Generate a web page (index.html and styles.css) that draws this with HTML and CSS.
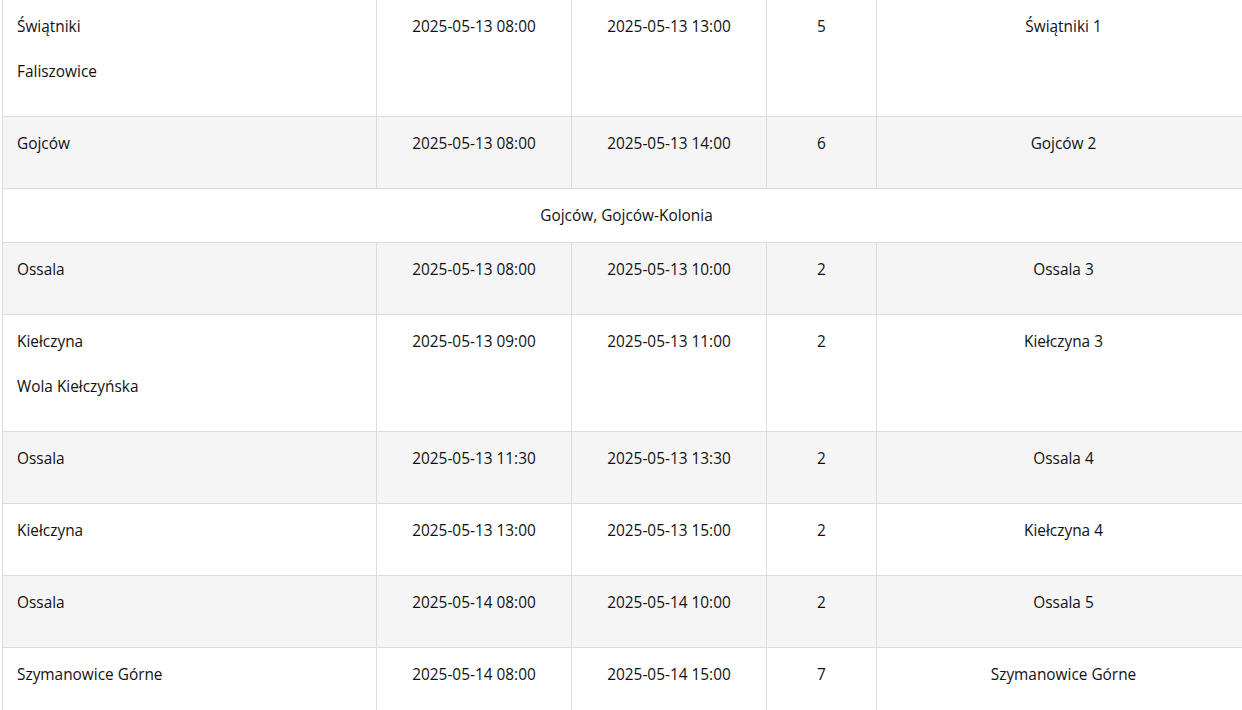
FILE: index.html
```html
<!DOCTYPE html>
<html lang="pl">
<head>
<meta charset="utf-8">
<title>Harmonogram wyłączeń</title>
<link rel="stylesheet" href="styles.css">
</head>
<body>
<div class="wrap">
<table class="schedule">
  <colgroup>
    <col class="c-area"><col class="c-date"><col class="c-date"><col class="c-hours"><col class="c-name">
  </colgroup>
  <tbody>
    <tr>
      <td class="area"><p>Świątniki</p><p>Faliszowice</p></td>
      <td><p>2025-05-13 08:00</p></td>
      <td><p>2025-05-13 13:00</p></td>
      <td><p>5</p></td>
      <td><p>Świątniki 1</p></td>
    </tr>
    <tr class="alt">
      <td class="area"><p>Gojców</p></td>
      <td><p>2025-05-13 08:00</p></td>
      <td><p>2025-05-13 14:00</p></td>
      <td><p>6</p></td>
      <td><p>Gojców 2</p></td>
    </tr>
    <tr class="note">
      <td colspan="5">Gojców, Gojców-Kolonia</td>
    </tr>
    <tr class="alt">
      <td class="area"><p>Ossala</p></td>
      <td><p>2025-05-13 08:00</p></td>
      <td><p>2025-05-13 10:00</p></td>
      <td><p>2</p></td>
      <td><p>Ossala 3</p></td>
    </tr>
    <tr>
      <td class="area"><p>Kiełczyna</p><p>Wola Kiełczyńska</p></td>
      <td><p>2025-05-13 09:00</p></td>
      <td><p>2025-05-13 11:00</p></td>
      <td><p>2</p></td>
      <td><p>Kiełczyna 3</p></td>
    </tr>
    <tr class="alt">
      <td class="area"><p>Ossala</p></td>
      <td><p>2025-05-13 11:30</p></td>
      <td><p>2025-05-13 13:30</p></td>
      <td><p>2</p></td>
      <td><p>Ossala 4</p></td>
    </tr>
    <tr>
      <td class="area"><p>Kiełczyna</p></td>
      <td><p>2025-05-13 13:00</p></td>
      <td><p>2025-05-13 15:00</p></td>
      <td><p>2</p></td>
      <td><p>Kiełczyna 4</p></td>
    </tr>
    <tr class="alt">
      <td class="area"><p>Ossala</p></td>
      <td><p>2025-05-14 08:00</p></td>
      <td><p>2025-05-14 10:00</p></td>
      <td><p>2</p></td>
      <td><p>Ossala 5</p></td>
    </tr>
    <tr>
      <td class="area"><p>Szymanowice Górne</p></td>
      <td><p>2025-05-14 08:00</p></td>
      <td><p>2025-05-14 15:00</p></td>
      <td><p>7</p></td>
      <td><p>Szymanowice Górne</p></td>
    </tr>
  </tbody>
</table>
</div>
</body>
</html>
```

FILE: styles.css
```css
html, body {
  margin: 0;
  padding: 0;
  overflow: hidden;
  background: #fff;
}

body {
  font-family: "Open Sans", "Noto Sans", "Liberation Sans", sans-serif;
  font-size: 15.4px;
  color: #111;
}

.wrap {
  padding-left: 2px;
  margin-top: -1px;
}

.schedule {
  border-collapse: collapse;
  table-layout: fixed;
  width: 1248px;
}

.c-area { width: 374px; }
.c-date { width: 195px; }
.c-hours { width: 110px; }
.c-name { width: 374px; }

.schedule td {
  border: 1px solid #dcdcdc;
  padding: 13px 14px;
  vertical-align: top;
  text-align: center;
  line-height: 27px;
}

.schedule td.area {
  text-align: left;
}

.schedule td p {
  margin: 0 0 18px;
}

.schedule tr.alt td {
  background: #f5f5f5;
}

.schedule tr.note td {
  background: #fff;
}
```
